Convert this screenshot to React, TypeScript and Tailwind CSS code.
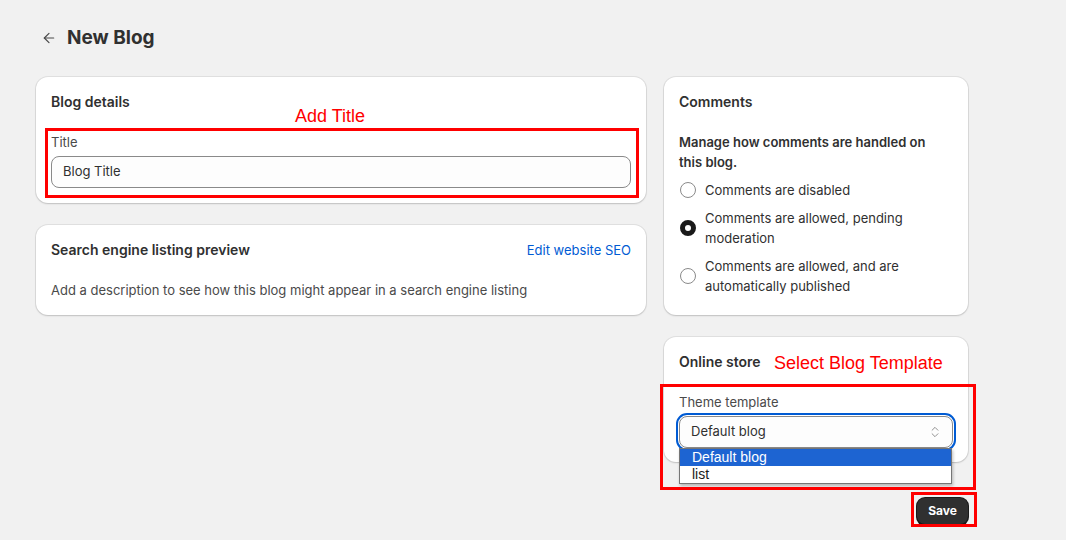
import { ArrowLeft, ChevronsUpDown } from 'lucide-react';

const card =
  'relative bg-white rounded-xl shadow-[0_0_0_1px_rgba(0,0,0,0.07),0_1px_2px_rgba(0,0,0,0.14)]';

function Radio({ checked, children }: { checked?: boolean; children: React.ReactNode }) {
  return (
    <label className="flex items-center gap-[9px]">
      <span
        className={
          checked
            ? 'h-4 w-4 shrink-0 rounded-full border-[5px] border-[#1a1a1a] bg-white ml-px'
            : 'h-4 w-4 shrink-0 rounded-full border border-[#8a8a8a] bg-white ml-px'
        }
      />
      <span className="text-[13px] leading-5 text-[#303030]">{children}</span>
    </label>
  );
}

export default function App() {
  return (
    <div
      className="min-h-[540px] w-full bg-[#f1f1f1] pl-[36px] pt-[26px] text-[#303030]"
      style={{ fontFamily: 'Inter, "Noto Sans", sans-serif' }}
    >
      {/* HEADER */}
      <div className="flex h-6 items-center gap-[10px] pl-[5px]">
        <ArrowLeft className="h-4 w-4 text-[#4a4a4a]" strokeWidth={1.8} />
        <h1 className="text-[19px] font-bold leading-6 text-[#303030]">New Blog</h1>
      </div>

      <div className="mt-[27px] flex w-[932px] gap-[18px]">
        {/* LEFT */}
        <div className="flex w-[610px] flex-col gap-[22px]">
          <div className={`${card} px-[15px] pt-[15px] pb-[15px]`}>
            <h2 className="text-[14px] font-semibold leading-5">Blog details</h2>
            <div className="mt-5">
              <div className="text-[13px] leading-5 text-[#4a4a4a]">Title</div>
              <div className="mt-1 flex h-8 items-center rounded-lg border border-[#8a8a8a] bg-[#fdfdfd] px-[11px] text-[13px] text-[#303030]">
                Blog Title
              </div>
            </div>
            {/* annotation */}
            <span
              className="absolute left-[259px] top-[27px] text-[18px] leading-6 text-[#ff0000]"
              style={{ fontFamily: '"Liberation Sans", Arial, sans-serif' }}
            >
              Add Title
            </span>
            <div className="pointer-events-none absolute left-[9px] top-[51px] h-[70px] w-[594px] border-[3px] border-[#ff0000]" />
          </div>

          <div className={`${card} px-[15px] pt-[15px] pb-[15px]`}>
            <div className="flex items-center justify-between">
              <h2 className="text-[14px] font-semibold leading-5">Search engine listing preview</h2>
              <a className="text-[13px] leading-5 text-[#005bd3]">Edit website SEO</a>
            </div>
            <p className="mt-5 text-[13px] leading-5 text-[#4a4a4a]">
              Add a description to see how this blog might appear in a search engine listing
            </p>
          </div>
        </div>

        {/* RIGHT */}
        <div className="flex w-[304px] flex-col gap-[22px]">
          <div className={`${card} px-[15px] pt-[15px] pb-[19px]`}>
            <h2 className="text-[14px] font-semibold leading-5">Comments</h2>
            <p className="mt-5 text-[13px] font-semibold leading-5 pr-6">
              Manage how comments are handled on this blog.
            </p>
            <div className="mt-2 flex flex-col gap-2">
              <Radio>Comments are disabled</Radio>
              <Radio checked>Comments are allowed, pending moderation</Radio>
              <Radio>Comments are allowed, and are automatically published</Radio>
            </div>
          </div>

          <div className={`${card} px-[15px] pt-[15px] pb-[14px]`}>
            <h2 className="text-[14px] font-semibold leading-5">Online store</h2>
            <div className="mt-5">
              <div className="text-[13px] leading-5 text-[#4a4a4a]">Theme template</div>
              <div className="relative mt-1">
                <div className="flex h-8 items-center justify-between rounded-lg border border-[#8a8a8a] bg-[#fdfdfd] pl-[11px] pr-[10px] text-[13px] outline outline-2 outline-offset-[1px] outline-[#005bd3]">
                  <span>Default blog</span>
                  <ChevronsUpDown className="h-[14px] w-[14px] text-[#8a8a8a]" strokeWidth={1.6} />
                </div>
                {/* native dropdown list */}
                <div
                  className="absolute left-0 top-full z-10 w-[273px] border border-[#767676] bg-white shadow-[1px_2px_3px_rgba(0,0,0,0.25)]"
                  style={{ fontFamily: '"Liberation Sans", Arial, sans-serif' }}
                >
                  <div className="h-[17px] bg-[#1d64d2] pl-3 text-[14px] leading-[17px] text-white">
                    Default blog
                  </div>
                  <div className="h-[17px] pl-3 text-[14px] leading-[17px] text-[#1a1a1a]">list</div>
                </div>
              </div>
            </div>
            {/* annotations */}
            <span
              className="absolute left-[110px] top-[14px] text-[18px] leading-6 text-[#ff0000]"
              style={{ fontFamily: '"Liberation Sans", Arial, sans-serif' }}
            >
              Select Blog Template
            </span>
            <div className="pointer-events-none absolute -left-[4px] top-[47px] z-20 h-[106px] w-[316px] border-[3px] border-[#ff0000]" />
          </div>

          <div className="mt-[13px] flex justify-end">
            <div className="relative">
              <button className="h-[27px] w-[51px] rounded-lg bg-[#303030] text-[12px] font-bold text-white shadow-[inset_0_-1px_0_rgba(0,0,0,0.6),0_0_0_1px_#1a1a1a]">
                Save
              </button>
              <div className="pointer-events-none absolute -left-[6px] -top-[5px] h-[35px] w-[66px] border-[3px] border-[#ff0000]" />
            </div>
          </div>
        </div>
      </div>
    </div>
  );
}
